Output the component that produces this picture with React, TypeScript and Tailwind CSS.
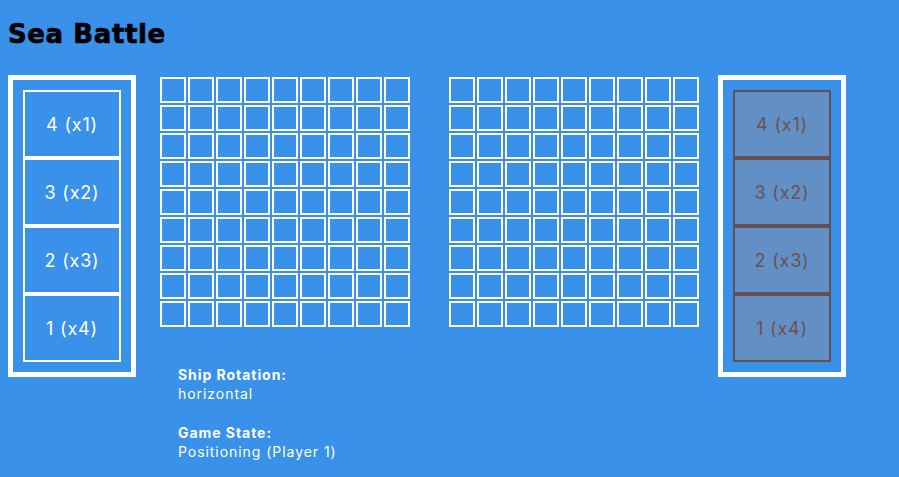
import React from "react";

const SHIPS = [
  { size: 4, count: 1 },
  { size: 3, count: 2 },
  { size: 2, count: 3 },
  { size: 1, count: 4 },
];

const CELLS = Array.from({ length: 81 }, (_, i) => i);

function ShipPanel({ inactive }: { inactive?: boolean }) {
  return (
    <div className="w-[128px] border-[5px] border-white p-[10px]">
      {SHIPS.map((s) => (
        <div
          key={s.size}
          className={`flex h-[68px] items-center justify-center border-2 text-[18px] tracking-[0.8px] ${
            inactive
              ? "border-[#664f52] bg-[#6290c4] text-[#6a5154]"
              : "border-white text-white"
          }`}
        >
          {s.size} ({`x${s.count}`})
        </div>
      ))}
    </div>
  );
}

function Board() {
  return (
    <div className="grid w-[250px] grid-cols-[repeat(9,26px)] gap-[2px]">
      {CELLS.map((c) => (
        <div key={c} className="h-[26px] w-[26px] border-2 border-white" />
      ))}
    </div>
  );
}

export default function App() {
  return (
    <div
      className="min-h-screen bg-[#3a91e9] px-2 text-white"
      style={{ fontFamily: "Inter, 'Noto Sans', sans-serif" }}
    >
      <h1
        className="pt-[19px] text-[26px] font-bold leading-[31px] tracking-[0.6px] text-black [-webkit-text-stroke:0.7px_black]"
        style={{ fontFamily: "'DejaVu Sans', sans-serif" }}
      >
        Sea Battle
      </h1>
      <div className="mt-[25px] flex items-start">
        <ShipPanel />
        <div className="ml-[24px] mt-[2px]">
          <div className="flex">
            <Board />
            <div className="ml-[39px]">
              <Board />
            </div>
          </div>
          <div className="mt-[38px] pl-[18px] text-[14px] leading-[19px] tracking-[0.95px]">
            <p className="font-bold">Ship Rotation:</p>
            <p>horizontal</p>
            <p className="mt-[20px] font-bold">Game State:</p>
            <p>Positioning (Player 1)</p>
          </div>
        </div>
        <div className="ml-[19px]">
          <ShipPanel inactive />
        </div>
      </div>
    </div>
  );
}
